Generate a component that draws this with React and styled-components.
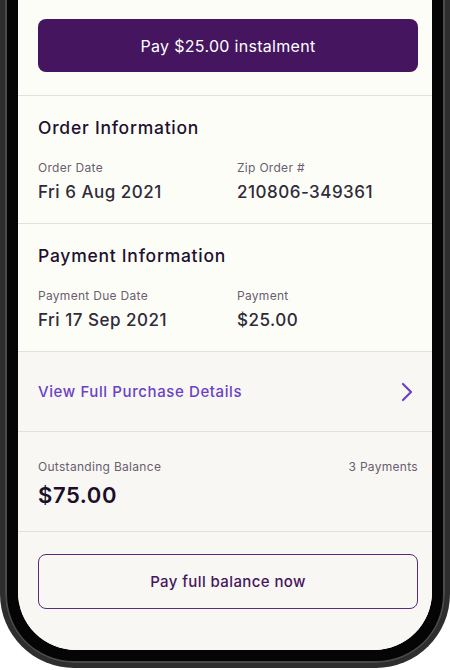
import React from "react";
import styled, { createGlobalStyle } from "styled-components";

const GlobalStyle = createGlobalStyle`
  html, body {
    margin: 0;
    padding: 0;
    background: #ffffff;
  }
  body {
    font-family: "Inter", "Liberation Sans", sans-serif;
    -webkit-font-smoothing: antialiased;
  }
`;

const Phone = styled.div`
  width: 450px;
  box-sizing: border-box;
  background: #050505;
  border: 5px solid #2e2e2e;
  border-top: none;
  border-radius: 0 0 74px 74px;
  box-shadow: inset 2px 0 0 #4a4a4a, inset -2px 0 0 #4a4a4a, inset 0 -2px 0 #4a4a4a;
  padding: 0 13px 13px 13px;
`;

const Screen = styled.div`
  background: #f8f7f3;
  border-radius: 0 0 58px 58px;
  overflow: hidden;
`;

const Section = styled.div`
  background: ${(p) => (p.$light ? "#fdfdf7" : "#f8f7f3")};
  border-bottom: ${(p) => (p.$last ? "none" : "1px solid #e3e1db")};
  padding: ${(p) => p.$pt || 0}px 14px 0 20px;
  box-sizing: border-box;
  height: ${(p) => p.$h}px;
`;

const PrimaryButton = styled.button`
  display: block;
  width: 100%;
  height: 53px;
  border: none;
  border-radius: 8px;
  background: #45155f;
  color: #ffffff;
  font-family: inherit;
  font-size: 16px;
  letter-spacing: 0.3px;
`;

const OutlineButton = styled.button`
  display: block;
  width: 100%;
  height: 55px;
  border: 1px solid #5a2a80;
  border-radius: 8px;
  background: transparent;
  color: #45155f;
  font-family: inherit;
  font-size: 15px;
  font-weight: 500;
  letter-spacing: 0.4px;
`;

const Heading = styled.h2`
  margin: 0;
  font-size: 17.5px;
  line-height: 22px;
  font-weight: 500;
  color: #1e1030;
  letter-spacing: 0.75px;
`;

const Grid = styled.div`
  display: grid;
  grid-template-columns: 199px 1fr;
  margin-top: 21px;
`;

const Label = styled.div`
  font-size: 12px;
  line-height: 16px;
  color: #6a5e70;
  letter-spacing: 0.3px;
`;

const Value = styled.div`
  margin-top: 5px;
  font-size: 17px;
  line-height: 22px;
  font-weight: 500;
  color: #2f2b3a;
  letter-spacing: 0.5px;
`;

const LinkRow = styled.div`
  display: flex;
  align-items: center;
  justify-content: space-between;
  height: 100%;
  padding-right: 5px;
  color: #6a41c6;
  font-size: 15px;
  font-weight: 500;
  letter-spacing: 0.6px;
`;

const BalanceTop = styled.div`
  display: flex;
  justify-content: space-between;
`;

const Amount = styled.div`
  margin-top: 6px;
  font-size: 22px;
  line-height: 28px;
  font-weight: 600;
  color: #1a0f2a;
  letter-spacing: 0.6px;
`;

const Chevron = () => (
  <svg width="12" height="20" viewBox="0 0 12 20" fill="none">
    <path d="M2 2l8 8-8 8" stroke="#6a41c6" strokeWidth="2.2" strokeLinecap="round" strokeLinejoin="round" />
  </svg>
);

const InfoBlock = ({ title, items }) => (
  <>
    <Heading>{title}</Heading>
    <Grid>
      {items.map((it) => (
        <div key={it.label}>
          <Label>{it.label}</Label>
          <Value>{it.value}</Value>
        </div>
      ))}
    </Grid>
  </>
);

export default function App() {
  return (
    <>
      <GlobalStyle />
      <Phone>
        <Screen>
          <Section $light $h={96} $pt={19}>
            <PrimaryButton>Pay $25.00 instalment</PrimaryButton>
          </Section>
          <Section $light $h={128} $pt={21}>
            <InfoBlock
              title="Order Information"
              items={[
                { label: "Order Date", value: "Fri 6 Aug 2021" },
                { label: "Zip Order #", value: "210806-349361" },
              ]}
            />
          </Section>
          <Section $light $h={128} $pt={21}>
            <InfoBlock
              title="Payment Information"
              items={[
                { label: "Payment Due Date", value: "Fri 17 Sep 2021" },
                { label: "Payment", value: "$25.00" },
              ]}
            />
          </Section>
          <Section $h={80}>
            <LinkRow>
              <span>View Full Purchase Details</span>
              <Chevron />
            </LinkRow>
          </Section>
          <Section $h={100} $pt={27}>
            <BalanceTop>
              <Label>Outstanding Balance</Label>
              <Label>3 Payments</Label>
            </BalanceTop>
            <Amount>$75.00</Amount>
          </Section>
          <Section $last $h={118} $pt={22}>
            <OutlineButton>Pay full balance now</OutlineButton>
          </Section>
        </Screen>
      </Phone>
    </>
  );
}
